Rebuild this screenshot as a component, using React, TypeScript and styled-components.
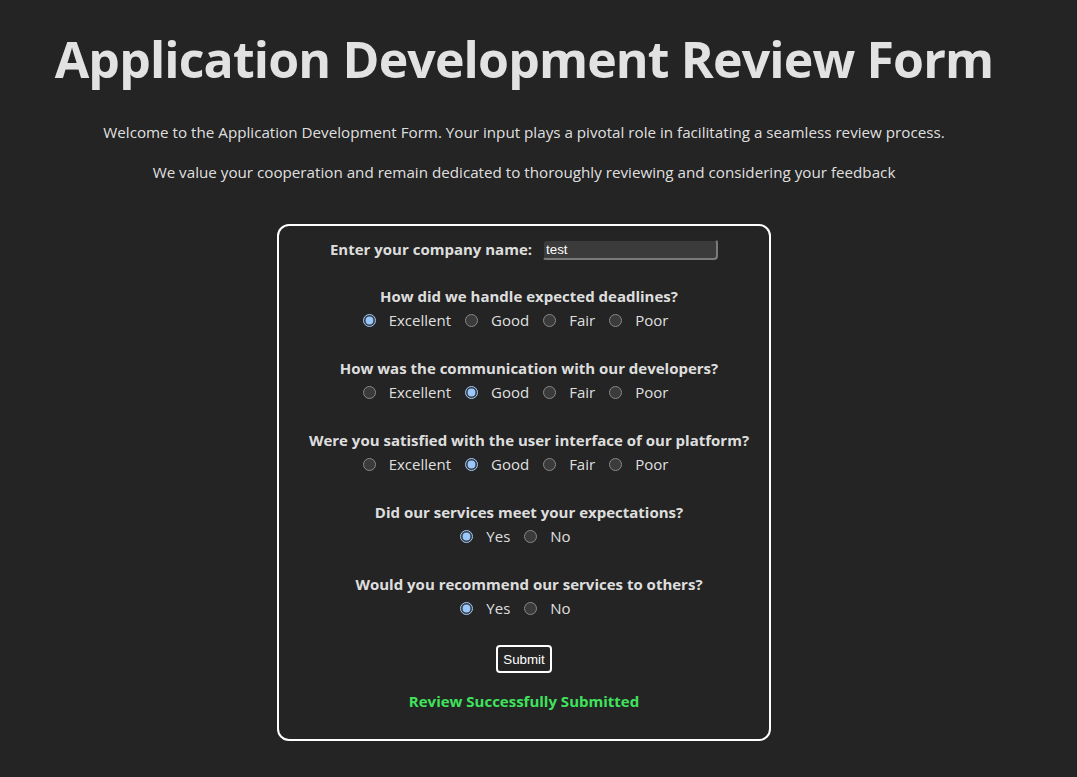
import React from "react";
import styled, { createGlobalStyle } from "styled-components";

const GlobalStyle = createGlobalStyle`
  html, body {
    margin: 0;
    padding: 0;
    background: #242424;
    color-scheme: dark;
  }
  body {
    color: rgba(255, 255, 255, 0.87);
    font-family: "Open Sans", "Noto Sans", sans-serif;
    font-size: 16px;
    line-height: 1.5;
    -webkit-font-smoothing: antialiased;
  }
`;

const Page = styled.main`
  box-sizing: border-box;
  width: 1048px;
  min-height: 777px;
  padding: 32px 0 32px;
  display: flex;
  flex-direction: column;
  align-items: center;
  text-align: center;
`;

const Title = styled.h1`
  margin: 0;
  font-size: 50px;
  line-height: 55px;
  font-weight: 700;
  letter-spacing: -0.85px;
  color: rgba(255, 255, 255, 0.87);
`;

const Intro = styled.p<{ $first?: boolean }>`
  margin: ${(p) => (p.$first ? "33px" : "16px")} 0 0;
  font-size: 15.2px;
  line-height: 24px;
`;

const FormCard = styled.form`
  box-sizing: border-box;
  width: 494px;
  margin-top: 40px;
  padding: 11px 0 26px;
  border: 2px solid #ffffff;
  border-radius: 12px;
  display: flex;
  flex-direction: column;
  align-items: center;
`;

const NameRow = styled.div`
  display: flex;
  align-items: center;
  justify-content: center;
  gap: 10px;
  height: 24px;
  margin-bottom: 23px;
`;

const BoldLabel = styled.label`
  font-weight: 700;
  font-size: 15px;
  line-height: 24px;
`;

const TextInput = styled.input`
  box-sizing: border-box;
  width: 176px;
  height: 21px;
  padding: 1px 2px;
  background: #3b3b3b;
  color: #ffffff;
  border: 2px inset #7a7a7a;
  border-radius: 4px;
  font-family: "Liberation Sans", Arial, sans-serif;
  font-size: 13.33px;
  outline: none;
`;

const Question = styled.fieldset`
  border: 0;
  margin: 0 0 24px;
  padding: 0;
  display: flex;
  flex-direction: column;
  align-items: center;
`;

const QuestionText = styled.legend`
  padding: 0 0 0 10px;
  margin: 0 auto;
  font-weight: 700;
  font-size: 15px;
  line-height: 24px;
`;

const Options = styled.div`
  display: flex;
  align-items: center;
  justify-content: center;
  height: 24px;
  margin-left: -3px;
`;

const Option = styled.label`
  display: flex;
  align-items: center;
  font-size: 15px;
  line-height: 24px;
  margin-right: 14px;
`;

const Radio = styled.input`
  width: 13px;
  height: 13px;
  margin: 0 13px 0 0;
`;

const SubmitButton = styled.button`
  margin-top: 1px;
  box-sizing: border-box;
  height: 28px;
  padding: 0 5px;
  background: transparent;
  color: #ffffff;
  border: 2px solid #ffffff;
  border-radius: 4px;
  font-family: "Liberation Sans", Arial, sans-serif;
  font-size: 13.33px;
  cursor: pointer;
`;

const Success = styled.p`
  margin: 16px 0 0;
  color: #40e25d;
  font-weight: 700;
  font-size: 15px;
  line-height: 24px;
`;

type Q = { text: string; name: string; options: string[]; selected: string };

const questions: Q[] = [
  {
    text: "How did we handle expected deadlines?",
    name: "deadlines",
    options: ["Excellent", "Good", "Fair", "Poor"],
    selected: "Excellent",
  },
  {
    text: "How was the communication with our developers?",
    name: "communication",
    options: ["Excellent", "Good", "Fair", "Poor"],
    selected: "Good",
  },
  {
    text: "Were you satisfied with the user interface of our platform?",
    name: "ui",
    options: ["Excellent", "Good", "Fair", "Poor"],
    selected: "Good",
  },
  {
    text: "Did our services meet your expectations?",
    name: "expectations",
    options: ["Yes", "No"],
    selected: "Yes",
  },
  {
    text: "Would you recommend our services to others?",
    name: "recommend",
    options: ["Yes", "No"],
    selected: "Yes",
  },
];

export default function App() {
  return (
    <>
      <GlobalStyle />
      <Page>
        <Title>Application Development Review Form</Title>
        <Intro $first>
          Welcome to the Application Development Form. Your input plays a pivotal role in
          facilitating a seamless review process.
        </Intro>
        <Intro>
          We value your cooperation and remain dedicated to thoroughly reviewing and considering
          your feedback
        </Intro>
        <FormCard onSubmit={(e) => e.preventDefault()}>
          <NameRow>
            <BoldLabel htmlFor="company">Enter your company name:</BoldLabel>
            <TextInput id="company" type="text" defaultValue="test" />
          </NameRow>
          {questions.map((q) => (
            <Question key={q.name}>
              <QuestionText>{q.text}</QuestionText>
              <Options>
                {q.options.map((o) => (
                  <Option key={o}>
                    <Radio type="radio" name={q.name} defaultChecked={o === q.selected} />
                    {o}
                  </Option>
                ))}
              </Options>
            </Question>
          ))}
          <SubmitButton type="submit">Submit</SubmitButton>
          <Success>Review Successfully Submitted</Success>
        </FormCard>
      </Page>
    </>
  );
}
